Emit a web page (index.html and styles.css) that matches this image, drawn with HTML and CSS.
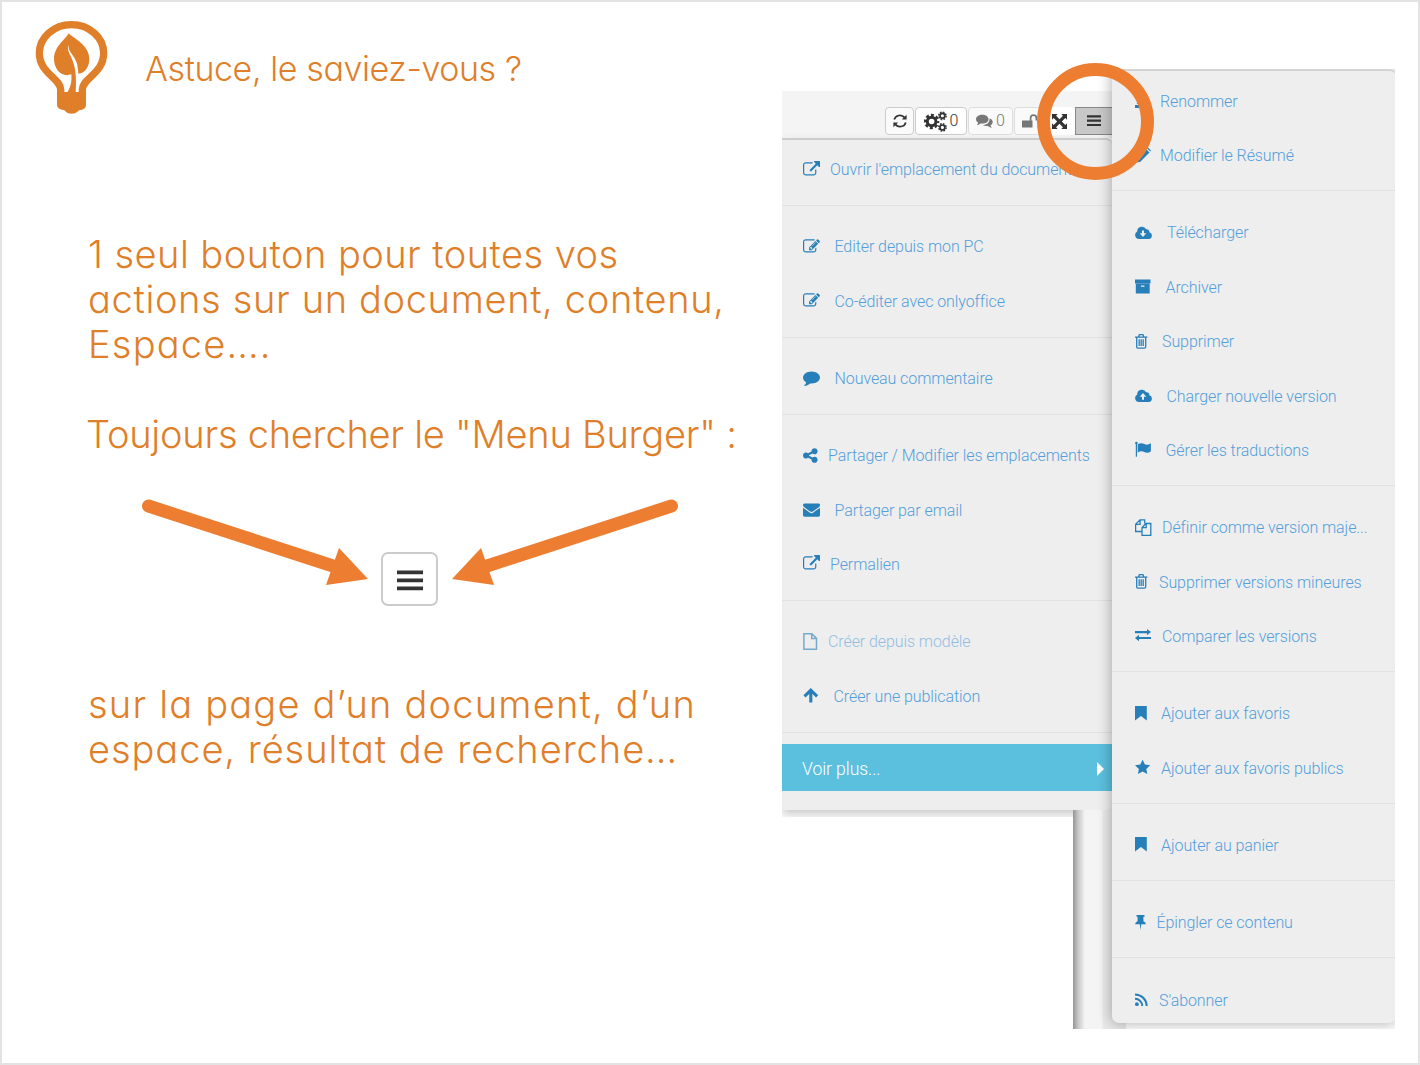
FILE: index.html
```html
<!DOCTYPE html>
<html lang="fr">
<head>
<meta charset="utf-8">
<title>Astuce, le saviez-vous ?</title>
<link rel="stylesheet" href="styles.css">
</head>
<body>
<svg class="defs" aria-hidden="true">
  <symbol id="external" viewBox="0 0 1792 1792"><path d="M1408 928v320q0 119-84.5 203.5t-203.5 84.5h-832q-119 0-203.5-84.5t-84.500-203.5v-832q0-119 84.5-203.5t203.5-84.5h704q14 0 23 9t9 23v64q0 14-9 23t-23 9h-704q-66 0-113 47t-47 113v832q0 66 47 113t113 47h832q66 0 113-47t47-113v-320q0-14 9-23t23-9h64q14 0 23 9t9 23zm384-864v512q0 26-19 45t-45 19-45-19l-176-176-652 652q-10 10-23 10t-23-10l-114-114q-10-10-10-23t10-23l652-652-176-176q-19-19-19-45t19-45 45-19h512q26 0 45 19t19 45z"/></symbol>
  <symbol id="edit" viewBox="0 0 1792 1792"><path d="M888 1184l116-116-152-152-116 116v56h96v96h56zm440-720q-16-16-33 1l-350 350q-17 17-1 33t33-1l350-350q17-17 1-33zm80 594v190q0 119-84.5 203.5t-203.5 84.5h-832q-119 0-203.5-84.5t-84.5-203.5v-832q0-119 84.5-203.5t203.5-84.5h832q63 0 117 25 15 7 18 23 3 17-9 29l-49 49q-14 14-32 8-23-6-45-6h-832q-66 0-113 47t-47 113v832q0 66 47 113t113 47h832q66 0 113-47t47-113v-126q0-13 9-22l64-64q15-15 35-7t20 29zm-96-738l288 288-672 672h-288v-288zm444 132l-92 92-288-288 92-92q28-28 68-28t68 28l152 152q28 28 28 68t-28 68z"/></symbol>
  <symbol id="comment" viewBox="0 0 1792 1792"><path d="M1792 896q0 174-120 321.5t-326 233-450 85.5q-70 0-145-8-198 175-460 242-49 14-114 22h-5q-15 0-27-10.5t-16-27.5v-1q-3-4-.5-12t2-10 4.5-9.5l6-9 7-8.5 8-9q7-8 31-34.5t34.5-38 31-39.5 32.5-51 27-59 26-76q-157-89-247.5-220t-90.5-281q0-130 71-248.5t191-204.5 286-136.5 348-50.5 348 50.5 286 136.5 191 204.5 71 248.5z"/></symbol>
  <symbol id="share" viewBox="128 0 1792 1792"><path d="M1344 1024q133 0 226.5 93.5t93.5 226.5-93.5 226.5-226.5 93.5-226.5-93.5-93.5-226.5q0-12 2-34l-360-180q-92 86-218 86-133 0-226.5-93.5t-93.5-226.5 93.5-226.5 226.5-93.5q126 0 218 86l360-180q-2-22-2-34 0-133 93.5-226.5t226.5-93.5 226.5 93.5 93.5 226.5-93.5 226.5-226.5 93.5q-126 0-218-86l-360 180q2 22 2 34t-2 34l360 180q92-86 218-86z"/></symbol>
  <symbol id="mail" viewBox="0 0 1792 1792"><path d="M1792 710v794q0 66-47 113t-113 47h-1472q-66 0-113-47t-47-113v-794q44 49 101 87 362 246 497 345 57 42 92.5 65.5t94.5 48 110 24.5h2q51 0 110-24.5t94.5-48 92.5-65.5q170-123 498-345 57-39 100-87zm0-294q0 79-49 151t-122 123q-376 261-468 325-10 7-42.5 31t-54 38.5-52 32.5-57.5 27-50 9h-2q-23 0-50-9t-57.5-27-52-32.5-54-38.5-42.5-31q-91-64-262-182.5t-205-142.5q-62-42-117-115.5t-55-136.5q0-78 41.5-130t118.5-52h1472q65 0 112.5 47t47.5 113z"/></symbol>
  <symbol id="file" viewBox="0 0 17 17"><path fill="none" stroke="currentColor" stroke-width="1.5" d="M.9.8h8l4.600 4.600V16.200H.9zM8.700.8v4.800h4.800"/></symbol>
  <symbol id="arrow-up" viewBox="0 0 17 17"><path fill="none" stroke="currentColor" stroke-width="3.100" d="M1.500 9.300l6.300-6.200 6.300 6.200M7.800 3.800V15.500"/></symbol>
  <symbol id="pencil" viewBox="0 0 17 17"><path d="M0 15.500l1-4.500L10.500 1.500l4 4L5 15zM11.500.700l1-.7 3.500 3.500-.7 1z"/></symbol>
  <symbol id="underline" viewBox="0 0 17 17"><path d="M0 13h9v3H0zM1.500 12L7 6l2.500 2.500L5 12z"/></symbol>
  <symbol id="cloud-down" viewBox="0 0 17 17"><path fill-rule="evenodd" d="M4 15a4 4 0 0 1-1.800-7.500A4.800 4.800 0 0 1 11.200 5.200 2.600 2.600 0 0 1 14.300 8.300 3.400 3.400 0 0 1 13.600 15zM7 6.500V9.300H4.700L8 12.900l3.300-3.600H9V6.500z"/></symbol>
  <symbol id="cloud-up" viewBox="0 0 17 17"><path fill-rule="evenodd" d="M4 15a4 4 0 0 1-1.800-7.500A4.800 4.800 0 0 1 11.200 5.200 2.600 2.600 0 0 1 14.300 8.300 3.400 3.400 0 0 1 13.600 15zM7 12.700V9.700H4.700L8 6.100l3.300 3.600H9V12.700z"/></symbol>
  <symbol id="archive" viewBox="0 0 17 17"><path fill-rule="evenodd" d="M0 1.500h15.500v3.900H0zM.8 5.800h13.900v9.700H.8zM6 7.500v1.200h3.500V7.500z"/></symbol>
  <symbol id="trash" viewBox="0 0 17 17"><path fill="none" stroke="currentColor" stroke-width="1.300" d="M0 4.200h12.400M1.700 4.200v9.600q0 1.400 1.200 1.400h6.600q1.200 0 1.200-1.400V4.200M3.500 4l.9-2.300h3.600L8.900 4M4.200 6.300v6.800M6.200 6.300v6.800M8.200 6.300v6.800"/></symbol>
  <symbol id="flag" viewBox="0 0 17 17"><circle cx="1.400" cy="2" r="1.300"/><path d="M.8 2h1.200v13.800H.8zM2.700 3.300C5 2 7 1.800 9.500 3.100c2 1 4 .6 6.400-.8v8.200c-2.500 1.400-4.300 1.700-6.600.5-2.200-1.100-4-.8-6.600.7z"/></symbol>
  <symbol id="copy" viewBox="0 0 17 17"><path fill="none" stroke="currentColor" stroke-width="1.300" d="M6.700 12.500H.6V5.200L5 .8h4.700v3.600M.8 5.300h4.300V.8M11 4.500h4.800v11.800H7V8.600zM7 8.700h4.200V4.500"/></symbol>
  <symbol id="exchange" viewBox="0 0 17 17"><path d="M0 4h12V1.900l4 3.200-4 3.200V6.200H0zM16 9.900H4V7.800L0 11l4 3.200v-2.100h12z"/></symbol>
  <symbol id="bookmark" viewBox="0 0 17 17"><path d="M0 1h11.800v14.500L5.900 11 0 15.500z"/></symbol>
  <symbol id="star" viewBox="0 0 17 17"><path d="M7.600.7l2.300 4.800 5.300.7-3.900 3.700 1 5.200-4.700-2.500-4.700 2.500 1-5.200L0 6.200l5.300-.7z"/></symbol>
  <symbol id="pin" viewBox="0 0 17 17"><path d="M1.500 1h8v1.800H8.400v4.400c1.500.6 2.400 1.600 2.400 3H6.300L5.600 16l-.8-5.800H.2c0-1.400.9-2.400 2.400-3V2.800H1.500z"/></symbol>
  <symbol id="rss" viewBox="0 0 17 17"><circle cx="1.900" cy="13.200" r="1.900"/><path fill="none" stroke="currentColor" stroke-width="2" d="M0 7.800A7.200 7.200 0 0 1 7.200 15M0 3.400A11.700 11.700 0 0 1 11.700 15"/></symbol>
  <symbol id="bars" viewBox="0 0 14 14"><path d="M0 1.300h14v2.100H0zM0 5.600h14v2.100H0zM0 9.900h14v2.100H0z"/></symbol>
  <symbol id="refresh" viewBox="0 0 14 14"><path fill="none" stroke="currentColor" stroke-width="1.700" d="M1.200 5.600A6 6 0 0 1 11.600 3.600M12.800 8.400A6 6 0 0 1 2.400 10.400"/><path d="M13.600.8v4.700H8.900zM.4 13.200V8.500h4.700z"/></symbol>
  <symbol id="gears" viewBox="0 0 23 21"><g fill="none" stroke="currentColor"><circle cx="7.600" cy="10.500" r="4.300" stroke-width="3"/><circle cx="7.600" cy="10.500" r="6.500" stroke-width="2.400" stroke-dasharray="3 2.105" stroke-dashoffset="1.500"/><circle cx="18.400" cy="4.800" r="2.400" stroke-width="1.700"/><circle cx="18.400" cy="4.800" r="3.700" stroke-width="1.500" stroke-dasharray="1.700 1.206"/><circle cx="18.400" cy="16.400" r="2.400" stroke-width="1.700"/><circle cx="18.400" cy="16.400" r="3.700" stroke-width="1.500" stroke-dasharray="1.700 1.206"/></g></symbol>
  <symbol id="comments" viewBox="0 0 17 14"><path d="M6.300.8c3.500 0 6.200 1.900 6.200 4.400s-2.700 4.400-6.200 4.400l-1.500-.1C3.700 10.400 2.300 11 .9 11.100c.8-.8 1.100-1.500 1.200-2.500C.8 7.800 0 6.600 0 5.200 0 2.700 2.800.8 6.300.8z"/><path d="M13.600 4.200c1.900.7 3.100 2 3.100 3.700 0 1.300-.8 2.500-2.100 3.300.1 1 .5 1.700 1.300 2.500-1.400-.1-2.800-.8-3.900-1.700-2 .3-3.900 0-5.300-.9 4-.1 7.200-2.800 6.900-6.900z"/></symbol>
  <symbol id="unlock" viewBox="0 0 16 14"><path d="M0 6.500h10.500v7H0z"/><path fill="none" stroke="currentColor" stroke-width="1.700" d="M8.600 7V4a2.900 2.900 0 0 1 5.800 0v2.600"/></symbol>
  <symbol id="expand" viewBox="0 0 14 14"><path d="M0 0h5.300L3.800 1.600 7 4.800l3.200-3.200L8.700 0H14v5.300l-1.600-1.500L9.200 7l3.200 3.200L14 8.700V14H8.700l1.500-1.600L7 9.200l-3.200 3.200L5.300 14H0V8.700l1.600 1.500L4.800 7 1.600 3.800 0 5.300z"/></symbol>
</svg>

<main class="slide">
  <section class="message">
    <header class="heading">
      <svg class="bulb" viewBox="0 0 330 345">
        <path fill="none" stroke="#df7f2a" stroke-width="22" d="M122 250v-11C122 205 58 190 58 130a96.500 86 0 0 1 193 0c0 60-64 75-64 109v11"/>
        <path fill="#df7f2a" d="M111 246h87v38c0 10-7 15-18 16-6 1-8 11-25 11s-18-9-24-11c-11-1-20-6-20-15z"/>
        <path fill="#df7f2a" d="M146 70c14 15 62 35 62 77 0 22-12 43-33 44-1-40-14-48-25-67-4-6-4-12-4-20-4 12-1 19 4 30 14 27 21 54 17 113h-25c9-14 14-30 12-54-30 11-52-17-52-46 0-39 37-60 44-77z"/>
      </svg>
      <h1><span class="t0">Astuce, le saviez-vous ?</span></h1>
    </header>
    <p><span class="t1">1 seul bouton pour toutes vos</span><br><span class="t2">actions sur un document, contenu,</span><br><span class="t3">Espace….</span></p>
    <p class="next"><span class="t4">Toujours chercher le "Menu Burger" :</span></p>
    <div class="pointers">
      <svg class="arrow" viewBox="0 0 230 92"><path class="shaft" d="M10.500 8L195 68"/><path d="M201 50l29 31-42 6z"/></svg>
      <span class="burger"><svg><use href="#bars"/></svg></span>
      <svg class="arrow flip" viewBox="0 0 230 92"><path class="shaft" d="M10.500 8L195 68"/><path d="M201 50l29 31-42 6z"/></svg>
    </div>
    <p class="last"><span class="t5">sur la page d’un document, d’un</span><br><span class="t6">espace, résultat de recherche…</span></p>
  </section>

  <section class="shot">
    <div class="app">
      <div class="toolbar">
        <span class="btn refresh"><svg><use href="#refresh"/></svg></span>
        <span class="btn gears"><svg><use href="#gears"/></svg>0</span>
        <span class="btn muted talk"><svg><use href="#comments"/></svg>0</span>
        <span class="btn muted lock"><svg><use href="#unlock"/></svg></span>
        <span class="btn full"><svg><use href="#expand"/></svg></span>
        <span class="btn pressed"><svg><use href="#bars"/></svg></span>
      </div>
      <ul class="menu primary">
        <li class="s27"><svg><use href="#external"/></svg>Ouvrir l'emplacement du document</li>
        <li class="rule"></li>
        <li class="s31"><svg><use href="#edit"/></svg>Editer depuis mon PC</li>
        <li class="s31"><svg><use href="#edit"/></svg>Co-éditer avec onlyoffice</li>
        <li class="rule"></li>
        <li class="s31"><svg><use href="#comment"/></svg>Nouveau commentaire</li>
        <li class="rule"></li>
        <li class="s25"><svg><use href="#share"/></svg>Partager / Modifier les emplacements</li>
        <li class="s31"><svg><use href="#mail"/></svg>Partager par email</li>
        <li class="s27"><svg><use href="#external"/></svg>Permalien</li>
        <li class="rule"></li>
        <li class="s25 disabled"><svg><use href="#file"/></svg>Créer depuis modèle</li>
        <li class="s30"><svg><use href="#arrow-up"/></svg>Créer une publication</li>
        <li class="rule"></li>
        <li class="more">Voir plus...<i class="caret"></i></li>
      </ul>
      <div class="under"><div class="strip"></div></div>
    </div>
    <ul class="menu secondary">
      <li class="s25"><svg><use href="#underline"/></svg>Renommer</li>
      <li class="s25"><svg><use href="#pencil"/></svg>Modifier le Résumé</li>
      <li class="rule"></li>
      <li class="s32"><svg><use href="#cloud-down"/></svg>Télécharger</li>
      <li class="s30"><svg><use href="#archive"/></svg>Archiver</li>
      <li class="s27"><svg><use href="#trash"/></svg>Supprimer</li>
      <li class="s31"><svg><use href="#cloud-up"/></svg>Charger nouvelle version</li>
      <li class="s30"><svg><use href="#flag"/></svg>Gérer les traductions</li>
      <li class="rule"></li>
      <li class="s27"><svg><use href="#copy"/></svg>Définir comme version maje...</li>
      <li class="s24"><svg><use href="#trash"/></svg>Supprimer versions mineures</li>
      <li class="s27"><svg><use href="#exchange"/></svg>Comparer les versions</li>
      <li class="rule"></li>
      <li class="s26"><svg><use href="#bookmark"/></svg>Ajouter aux favoris</li>
      <li class="s26"><svg><use href="#star"/></svg>Ajouter aux favoris publics</li>
      <li class="rule"></li>
      <li class="s26"><svg><use href="#bookmark"/></svg>Ajouter au panier</li>
      <li class="rule"></li>
      <li class="s22"><svg><use href="#pin"/></svg>Épingler ce contenu</li>
      <li class="rule"></li>
      <li class="s24"><svg><use href="#rss"/></svg>S'abonner</li>
    </ul>
  </section>
  <div class="ring"></div>
</main>
</body>
</html>
```
FILE: styles.css
```css
* { box-sizing: border-box; }
body { margin: 0; background: #fff; }
ul, p, h1 { margin: 0; padding: 0; list-style: none; font-weight: inherit; }
.defs { position: absolute; width: 0; height: 0; }
svg { fill: currentColor; flex: none; }

.slide {
  position: relative;
  display: grid;
  grid-template-columns: 780px 613px;
  width: 1420px;
  height: 1065px;
  border: 2px solid #e3e3e3;
  overflow: hidden;
}

/* Left: message */
.message {
  padding: 8px 0 0 86px;
  color: #df7f2a;
  font: 300 38px/45px Inter, "Liberation Sans", sans-serif;
  font-feature-settings: "cv11";
  white-space: nowrap;
}
.heading { display: flex; margin-left: -68px; height: 222px; }
.bulb { width: 110px; height: 115px; }
h1 { padding: 36px 0 0 15px; font-size: 34px; }
.t0 { letter-spacing: -.4px; }
.t1 { letter-spacing: .45px; }
.t2 { letter-spacing: .65px; }
.t3 { letter-spacing: 1.2px; }
.t4 { letter-spacing: -.24px; }
.t5 { letter-spacing: 1.2px; }
.t6 { letter-spacing: .95px; }
.next { margin: 45px 0 0 -2px; }
.last { margin-top: 75px; }
.pointers { display: flex; align-items: flex-start; padding: 41px 0 0 50px; height: 150px; }
.arrow { width: 230px; height: 92px; color: #ed7d31; }
.shaft { fill: none; stroke: currentColor; stroke-width: 13; stroke-linecap: round; }
.flip { transform: scaleX(-1); }
.burger {
  display: flex; align-items: center; justify-content: center;
  width: 57px; height: 54px; margin: 54px 14px 0 13px; padding-top: 3px;
  border: 2px solid #ccc; border-radius: 7px; color: #333;
}
.burger svg { width: 26px; height: 26px; }

/* Right: application menus */
.shot {
  position: relative;
  height: 960px;
  margin-top: 67px;
  overflow: hidden;
  font: 300 16px/20px Roboto, "Liberation Sans", sans-serif;
  letter-spacing: -.08px;
}
.app { width: 330px; padding-top: 22px; }
.toolbar {
  display: flex; align-items: flex-start;
  height: 47px; padding: 16px 0 0 103px;
  background: #f4f4f4;
}
.btn {
  display: flex; align-items: center; justify-content: center;
  height: 28px; flex: none; margin-right: 1px;
  border: 1px solid #ccc; border-radius: 4px;
  background: #fff; color: #333;
}
.btn svg { width: 14px; height: 14px; }
.refresh { width: 29px; background: #fafafa; }
.gears { width: 52px; gap: 3px; }
.gears svg { width: 23px; height: 21px; }
.talk { width: 45px; gap: 3px; }
.talk svg { width: 17px; height: 14px; }
.muted { color: #777; background: #fafafa; border-color: #ddd; }
.lock { width: 33px; margin: 0; padding-right: 3px; border-right: 0; }
.lock svg { width: 16px; }
.full { width: 28px; margin: 0; padding-right: 3px; border-color: #fff; }
.full svg { width: 15px; height: 15px; }
.pressed { width: 38px; margin: 0; background: #c8c8c8; border-color: #888; border-radius: 0; }

.menu { background: #eee; color: #539edb; }
.menu li { display: flex; align-items: center; height: 54.4px; white-space: nowrap; }
.menu li svg { width: 17px; height: 17px; margin-top: -2px; color: #277fba; }
.menu li.rule { height: 1px; margin: 8px 0 13.800px; background: #e2e2e2; }
.menu li.disabled { opacity: .6; }
.s22 svg { margin-right: 4.5px; }
.s24 svg { margin-right: 7px; }
.s25 svg { margin-right: 8px; }
.s26 svg { margin-right: 9px; }
.s27 svg { margin-right: 10px; }
.s30 svg { margin-right: 13.5px; }
.s31 svg { margin-right: 14.5px; }
.s32 svg { margin-right: 15px; }

.primary {
  position: relative;
  height: 672px; padding-top: 3px;
  border-top: 2px solid #ccc; border-radius: 0 6px 5px 0;
  box-shadow: 0 5px 10px rgba(0, 0, 0, .2);
}
.primary li:not(.rule):not(.more) { padding-left: 21px; }
.menu li.more {
  justify-content: space-between;
  height: 47px; margin-top: -3px; padding: 3px 8px 0 20px;
  background: #5bc0de; color: #fff; font-size: 17.6px;
}
.caret { border: 7px solid transparent; border-left-color: #fff; border-right: 0; }

.under {
  display: flex; justify-content: flex-end;
  position: relative;
  width: 344px; height: 212px; margin-top: 7px;
  background: #fff;
}
.strip {
  width: 53px; margin-top: -7px;
  background: linear-gradient(90deg, #959595 0, #c6c6c6 5px, #f4f4f4 12px, #f4f4f4 29px, #e9e9e9 30px);
}

.secondary {
  position: absolute; top: 0; left: 330px;
  width: 284px; height: 954px; padding-top: 3.5px;
  border-top: 2px solid #d4d4d4; border-radius: 7px;
  box-shadow: 0 0 14px 1px rgba(0, 0, 0, .3);
}
.secondary li:not(.rule) { padding-left: 23px; }
.secondary li.rule { margin: 7px 0 14.900px; }

.ring {
  position: absolute; left: 1035px; top: 61px;
  width: 117px; height: 117px;
  border: 13px solid #ed7d31; border-radius: 50%;
}
```
